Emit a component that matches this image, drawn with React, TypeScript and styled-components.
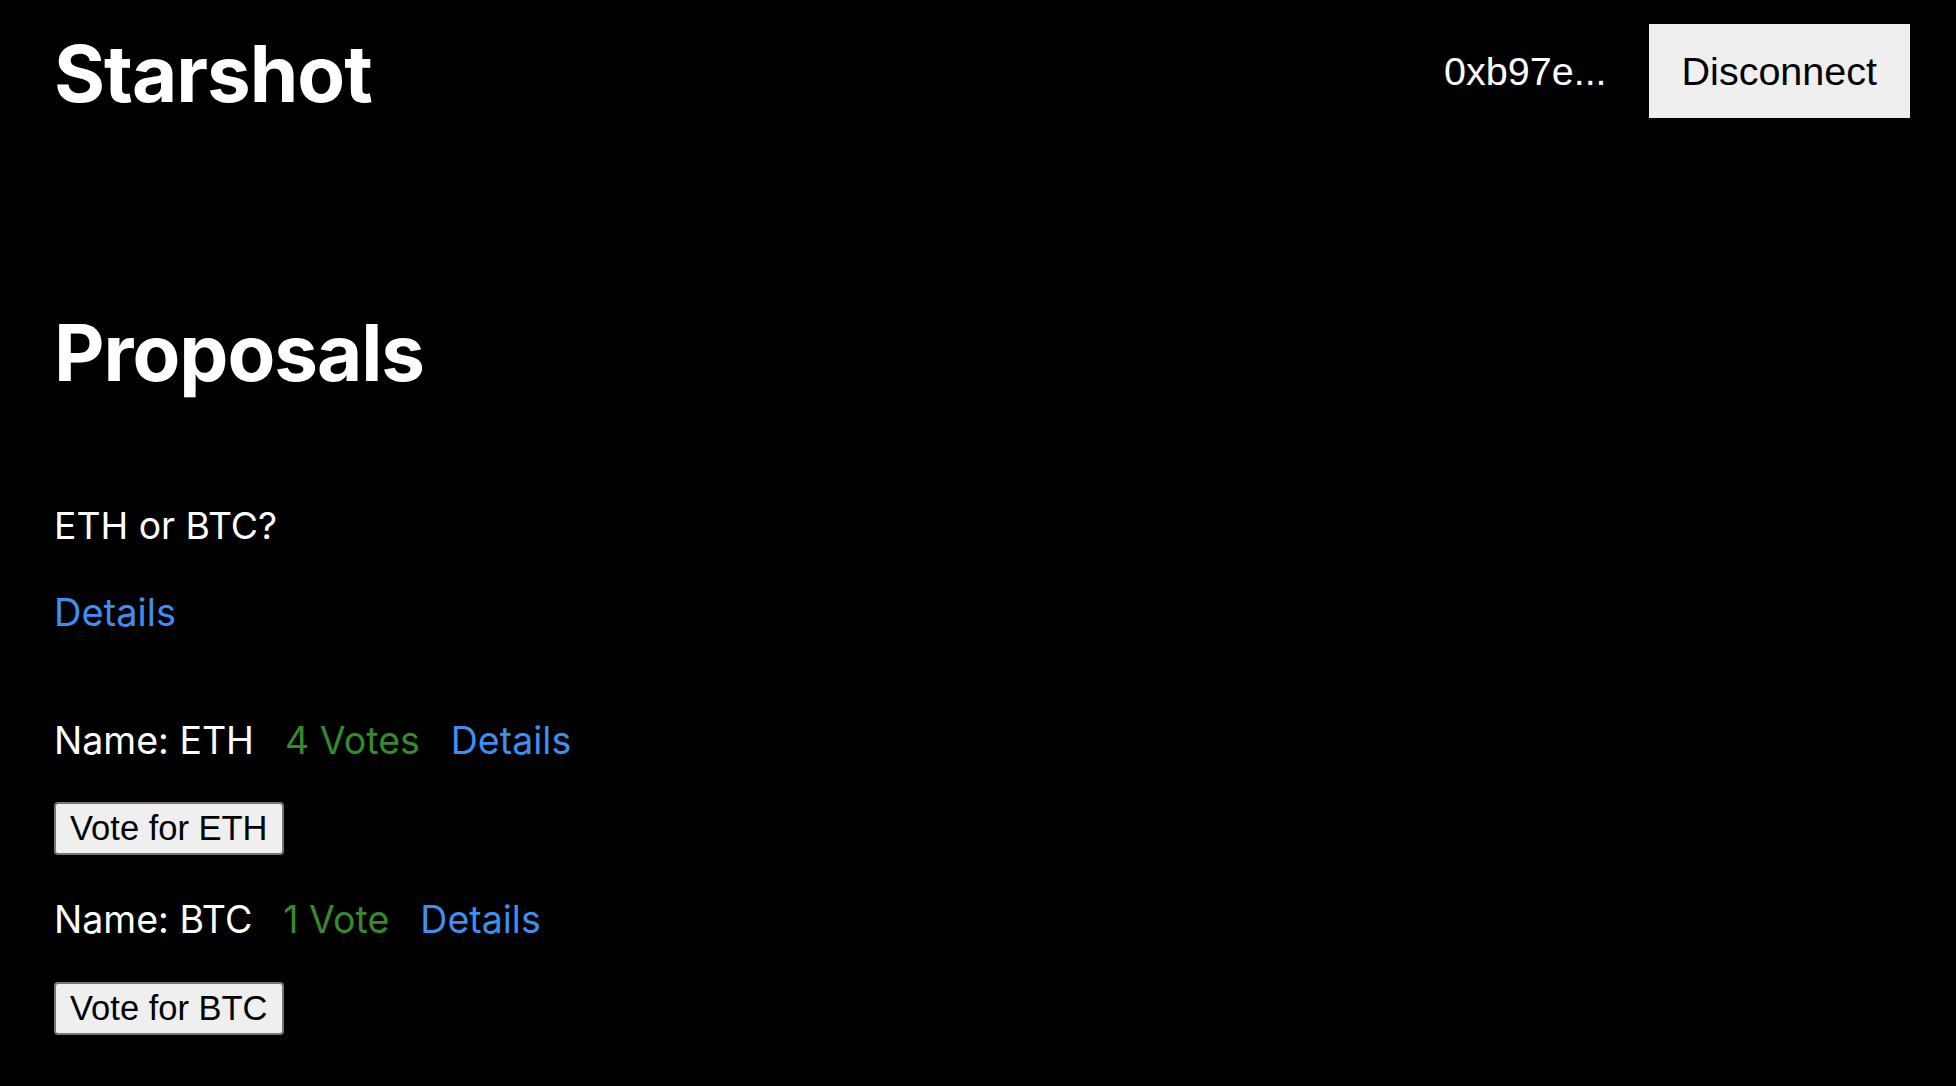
import React from "react";
import styled, { createGlobalStyle } from "styled-components";

const GlobalStyle = createGlobalStyle`
  html, body {
    margin: 0;
    padding: 0;
    background: #000000;
  }
  body {
    font-family: Inter, "Noto Sans", sans-serif;
    color: #ffffff;
  }
`;

const Page = styled.div`
  min-height: 1086px;
  background: #000000;
  padding: 0 46px 0 54px;
  box-sizing: border-box;
`;

const Header = styled.header`
  display: flex;
  align-items: flex-start;
  justify-content: space-between;
  padding-top: 24px;
`;

const Brand = styled.h1`
  margin: 0;
  padding-top: 3px;
  font-family: Inter, sans-serif;
  font-weight: 700;
  font-size: 78px;
  line-height: 94px;
  letter-spacing: -1px;
`;

const Account = styled.div`
  display: flex;
  align-items: flex-start;
  gap: 42px;
`;

const Address = styled.span`
  font-family: "Liberation Sans", Arial, sans-serif;
  font-size: 39.5px;
  line-height: 94px;
  color: #ffffff;
`;

const DisconnectButton = styled.button`
  height: 94px;
  padding: 0 33px;
  border: none;
  border-radius: 0;
  background: #efefef;
  color: #000000;
  font-family: "Liberation Sans", Arial, sans-serif;
  font-size: 39.5px;
  line-height: 94px;
  cursor: pointer;
`;

const Main = styled.main`
  display: flex;
  flex-direction: column;
`;

const SectionTitle = styled.h2`
  margin: 192px 0 0;
  font-family: Inter, sans-serif;
  font-weight: 700;
  font-size: 78px;
  line-height: 80px;
  letter-spacing: -1px;
`;

const Question = styled.p`
  margin: 111px 0 0;
  font-size: 37.3px;
  line-height: 44px;
`;

const Link = styled.a`
  color: #3f8ef2;
  text-decoration: none;
  cursor: pointer;
`;

const DetailsBlock = styled.div`
  margin-top: 41.5px;
  font-size: 38px;
  line-height: 44px;
`;

const Options = styled.div`
  display: flex;
  flex-direction: column;
  gap: 43.3px;
  margin-top: 85px;
`;

const Option = styled.div`
  display: flex;
  flex-direction: column;
  align-items: flex-start;
  gap: 39.7px;
`;

const OptionRow = styled.div`
  display: flex;
  align-items: baseline;
  gap: 31px;
  font-size: 37.5px;
  line-height: 44px;
`;

const Votes = styled.span`
  color: #378a2b;
`;

const VoteButton = styled.button`
  height: 53px;
  padding: 0 14px;
  border: 2px solid #767676;
  border-radius: 4px;
  background: #efefef;
  color: #000000;
  font-family: "Liberation Sans", Arial, sans-serif;
  font-size: 34.5px;
  line-height: 49px;
  cursor: pointer;
`;

type OptionData = { name: string; votes: number };

const options: OptionData[] = [
  { name: "ETH", votes: 4 },
  { name: "BTC", votes: 1 },
];

export default function App() {
  return (
    <>
      <GlobalStyle />
      <Page>
        <Header>
          <Brand>Starshot</Brand>
          <Account>
            <Address>0xb97e...</Address>
            <DisconnectButton>Disconnect</DisconnectButton>
          </Account>
        </Header>
        <Main>
          <SectionTitle>Proposals</SectionTitle>
          <Question>ETH or BTC?</Question>
          <DetailsBlock>
            <Link>Details</Link>
          </DetailsBlock>
          <Options>
            {options.map((o) => (
              <Option key={o.name}>
                <OptionRow>
                  <span>Name: {o.name}</span>
                  <Votes>
                    {o.votes} {o.votes === 1 ? "Vote" : "Votes"}
                  </Votes>
                  <Link>Details</Link>
                </OptionRow>
                <VoteButton>Vote for {o.name}</VoteButton>
              </Option>
            ))}
          </Options>
        </Main>
      </Page>
    </>
  );
}
